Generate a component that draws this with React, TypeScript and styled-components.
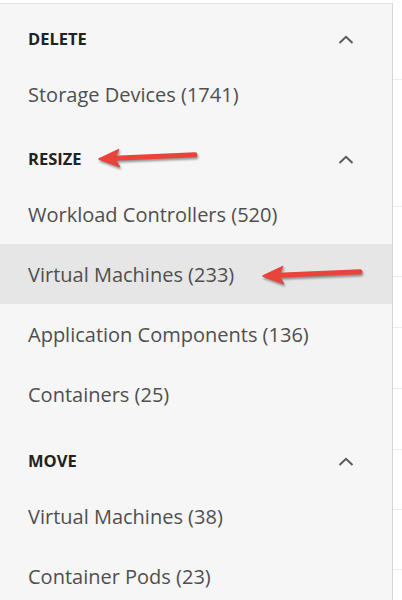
import React from 'react';
import styled, { createGlobalStyle } from 'styled-components';

const GlobalStyle = createGlobalStyle`
  html, body {
    margin: 0;
    padding: 0;
    background: #ffffff;
  }
  body {
    font-family: "Open Sans", "Noto Sans", "Liberation Sans", sans-serif;
  }
`;

const Page = styled.div`
  display: flex;
  width: 402px;
  height: 600px;
  overflow: hidden;
  padding-top: 3px;
  box-sizing: border-box;
  position: relative;
`;

const Panel = styled.div`
  width: 392px;
  flex-shrink: 0;
  background: #f6f6f6;
  border-top: 1px solid #e3e3e3;
  border-right: 1px solid #d6d6d6;
  display: flex;
  flex-direction: column;
`;

const Section = styled.div<{ $offset?: number }>`
  display: flex;
  flex-direction: column;
  margin-top: ${(p) => p.$offset ?? 0}px;
`;

const Header = styled.div`
  height: 60px;
  box-sizing: border-box;
  padding: 15px 38px 5px 28px;
  display: flex;
  align-items: center;
  justify-content: space-between;
`;

const HeaderTitle = styled.span`
  font-size: 16.5px;
  font-weight: 700;
  color: #222222;
  line-height: 40px;
`;

const Item = styled.div<{ $active?: boolean }>`
  height: 60px;
  display: flex;
  align-items: center;
  padding-left: 28px;
  background: ${(p) => (p.$active ? '#e6e6e6' : 'transparent')};
  font-size: 20px;
  color: #4f4f4f;
`;

const Gutter = styled.div`
  flex: 1;
  display: flex;
  flex-direction: column;
  background: #ffffff;
`;

const GutterCell = styled.div<{ $h: number }>`
  height: ${(p) => p.$h}px;
  flex-shrink: 0;
  border-bottom: 1px solid #ececec;
  box-sizing: border-box;
`;

const Arrow = styled.svg`
  position: absolute;
  overflow: visible;
  filter: drop-shadow(1px 2px 1.2px rgba(0, 0, 0, 0.4));
`;

const Chevron = () => (
  <svg width="16" height="9" viewBox="0 0 16 9">
    <path d="M1.5 8 L8 1.8 L14.5 8" fill="none" stroke="#5a5a5a" strokeWidth="2" />
  </svg>
);

const RedArrow: React.FC<{ left: number; top: number; length: number; tilt: number }> = ({
  left,
  top,
  length,
  tilt,
}) => (
  <Arrow width={length} height="24" viewBox={`0 0 ${length} 24`} style={{ left, top }}>
    <g transform={`rotate(${tilt} 0 12)`}>
      <line x1="16" y1="12" x2={length - 3} y2="12" stroke="#e8443a" strokeWidth="5" strokeLinecap="round" />
      <path d="M1 12 L21 3.5 L16.5 12 L21 20.5 Z" fill="#e8443a" stroke="#e8443a" strokeWidth="1.5" strokeLinejoin="round" />
    </g>
  </Arrow>
);

type Group = { title: string; items: string[]; active?: number; offset?: number };

const groups: Group[] = [
  { title: 'DELETE', items: ['Storage Devices (1741)'] },
  {
    title: 'RESIZE',
    items: [
      'Workload Controllers (520)',
      'Virtual Machines (233)',
      'Application Components (136)',
      'Containers (25)',
    ],
    active: 1,
  },
  { title: 'MOVE', items: ['Virtual Machines (38)', 'Container Pods (23)'], offset: 2 },
];

const gutter = [77, 127, 70, 51, 61, 61, 60, 60, 40];

export default function App() {
  return (
    <>
      <GlobalStyle />
      <Page>
        <Panel>
          {groups.map((g) => (
            <Section key={g.title} $offset={g.offset}>
              <Header>
                <HeaderTitle>{g.title}</HeaderTitle>
                <Chevron />
              </Header>
              {g.items.map((it, i) => (
                <Item key={it} $active={g.active === i}>
                  {it}
                </Item>
              ))}
            </Section>
          ))}
        </Panel>
        <Gutter>
          {gutter.map((h, i) => (
            <GutterCell key={i} $h={h} />
          ))}
        </Gutter>
        <RedArrow left={98} top={147} length={100} tilt={-2.5} />
        <RedArrow left={262} top={264} length={101} tilt={-2.5} />
      </Page>
    </>
  );
}
